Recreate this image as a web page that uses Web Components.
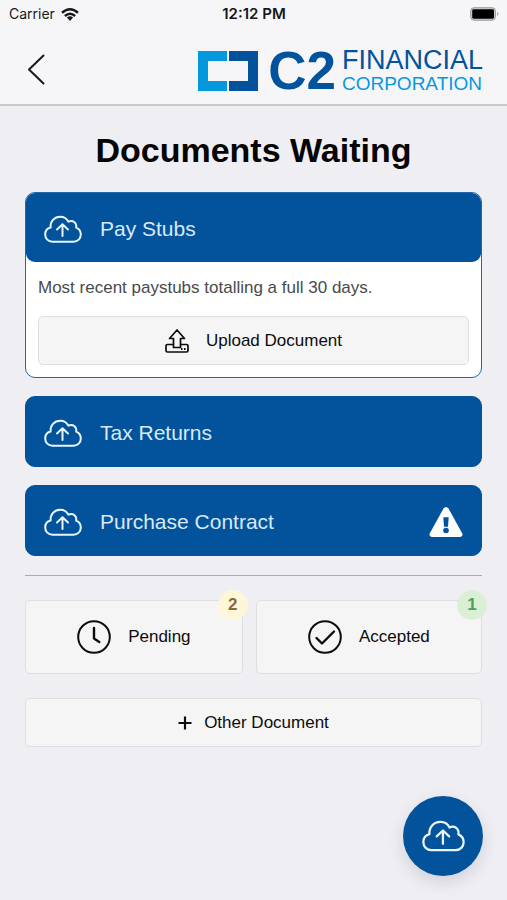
<!DOCTYPE html>
<html lang="en">
<head>
<meta charset="utf-8">
<meta name="viewport" content="width=device-width, initial-scale=1">
<title>Documents Waiting</title>
<style>
  :root { --blue: #02539c; --sky: #0698dc; --page: #efeef3; }
  body { margin: 0; background: var(--page); color: #0c0c0d; font: 17px/24px "Liberation Sans", Arial, sans-serif; }
</style>
</head>
<body>
<documents-screen></documents-screen>

<script>
const define = (name, html, setup) => {
  const template = document.createElement('template');
  template.innerHTML = html;
  customElements.define(name, class extends HTMLElement {
    constructor() {
      super();
      this.attachShadow({ mode: 'open' }).append(template.content.cloneNode(true));
    }
    connectedCallback() { if (setup) setup(this, this.shadowRoot); }
  });
};

const icons = {
  cloud: ['0 0 38 28', '<g fill="none" stroke="currentColor" stroke-width="2" stroke-linecap="round" stroke-linejoin="round"><path d="M8.500 26.700C4.200 26.700 1.200 23.500 1.200 19.600C1.200 16 3.300 13.300 6.600 12.500C6 6.500 10.300 1.700 16.300 1.700C20 1.700 22.800 3.500 24.300 6.700C28.700 4.400 33 7.700 32.200 12.700C35 13.900 36.800 16.500 36.800 19.600C36.800 23.500 33.800 26.700 29.500 26.700Z"/><path d="M18.500 21V10M13 14.500L18.500 9.300L24 14.500"/></g>'],
  upload: ['0 0 24 24', '<g fill="none" stroke="currentColor" stroke-width="1.700" stroke-linejoin="round"><path d="M8.500 15.500H2.500Q1 15.500 1 17V21.500Q1 23 2.500 23H21.500Q23 23 23 21.500V17Q23 15.500 21.500 15.500H15.500"/><path d="M8.500 18.500V9.500H4.500L12 1L19.500 9.500H15.500V18.500Z"/></g><path d="M16 19h1.500v2H16zM19 19h1.500v2H19z" fill="currentColor"/>'],
  clock: ['0 0 34 34', '<g fill="none" stroke="currentColor" stroke-width="2" stroke-linecap="round" stroke-linejoin="round"><circle cx="17" cy="17" r="15.800"/><path stroke-width="2.400" d="M17 8V18.500L22.300 22"/></g>'],
  check: ['0 0 34 34', '<g fill="none" stroke="currentColor" stroke-width="2" stroke-linecap="round" stroke-linejoin="round"><circle cx="17" cy="17" r="15.800"/><path stroke-width="2.400" d="M8.500 18L14 23.500L26 11.500"/></g>'],
  plus: ['0 0 14 14', '<path d="M7 .5V13.500M.5 7H13.500" stroke="currentColor" stroke-width="2.200"/>'],
  warning: ['0 0 34 30', '<path fill="currentColor" d="M14.500 1.600Q17-1.400 19.500 1.600L33.300 26.500Q34.300 29.600 31 30H3Q-.3 29.600.7 26.500Z"/><path fill="#02539c" d="M14.300 10.300H19.700L19 19.800H15Z"/><circle cx="17" cy="23.500" r="2.800" fill="#02539c"/>'],
  back: ['0 0 18 31', '<path d="M16.500 1.500L2 15.500L16.500 29.500" fill="none" stroke="currentColor" stroke-width="2" stroke-linecap="round" stroke-linejoin="round"/>'],
  wifi: ['0 0 18 13', '<g fill="none" stroke="currentColor" stroke-width="2.500"><path d="M1 4.800Q9-2.300 17 4.800M3.900 8Q9 3.500 14.100 8"/></g><path d="M5.900 9.600Q9 7 12.100 9.600L9 13Z" fill="currentColor"/>'],
  battery: ['0 0 30 15', '<rect x=".7" y=".7" width="25.600" height="13" rx="3.500" fill="#ccc" stroke="#999" stroke-width="1"/><rect x="2.300" y="2.300" width="22.500" height="9.800" rx="1.500"/><path d="M28 5Q31 7.200 28 9.400Z" fill="#aaa"/>'],
  brackets: ['0 0 60 40', '<path d="M0 0H29V10H10V30H29V40H0Z" fill="#0698dc"/><path d="M31 0H60V40H31V30H50V10H31Z" fill="#02539c"/>']
};

define('app-icon', `
  <style>
    :host { display: block; flex: none; width: 24px; }
    svg { display: block; width: 100%; height: auto; overflow: visible; }
  </style>`, (host, root) => {
  const icon = icons[host.getAttribute('name')];
  if (!icon || root.querySelector('svg')) return;
  root.innerHTML += `<svg viewBox="${icon[0]}" aria-hidden="true">${icon[1]}</svg>`;
});

define('status-bar', `
  <style>
    :host { display: grid; grid-template-columns: 1fr auto 1fr; align-items: center; height: 28px; padding: 0 8px 0 9px; font: 14px/20px Inter, sans-serif; color: #18181a; }
    .network { display: flex; align-items: center; gap: 6px; }
    time { font-size: 15px; font-weight: 600; }
    .wifi { width: 18px; }
    .battery { width: 29px; justify-self: end; color: #000; }
  </style>
  <div class="network"><span>Carrier</span><app-icon class="wifi" name="wifi"></app-icon></div>
  <time>12:12 PM</time>
  <app-icon class="battery" name="battery"></app-icon>`);

define('brand-logo', `
  <style>
    :host { display: flex; align-items: center; color: var(--blue); }
    app-icon { width: 60px; }
    .initials { margin: 0 6px 0 10px; font-size: 53px; line-height: 44px; font-weight: 700; }
    .name { display: grid; }
    .top { font-size: 27px; line-height: 26px; }
    .bottom { font-size: 19px; line-height: 22px; color: var(--sky); }
  </style>
  <app-icon name="brackets"></app-icon>
  <span class="initials">C2</span>
  <span class="name"><span class="top">FINANCIAL</span><span class="bottom">CORPORATION</span></span>`);

define('app-header', `
  <style>
    :host { display: block; background: #f6f6f9; border-bottom: 2px solid #c9c9cc; }
    .bar { display: flex; align-items: center; justify-content: space-between; height: 76px; box-sizing: border-box; padding: 6px 24px 0 19px; }
    button { display: block; padding: 4px 8px; border: 0; background: none; color: #18181a; }
    app-icon { width: 18px; }
    brand-logo { margin-top: 4px; }
  </style>
  <status-bar></status-bar>
  <div class="bar">
    <button type="button" aria-label="Back"><app-icon name="back"></app-icon></button>
    <brand-logo></brand-logo>
  </div>`);

define('document-card', `
  <style>
    :host { display: block; border: 1px solid #2068a9; border-radius: 10px; background: #fff; }
    :host(:not([open])) { border-color: var(--blue); background: var(--blue); }
    .head { display: flex; align-items: center; gap: 18px; width: 100%; height: 69px; padding: 2px 18px 0; border: 0; border-radius: 9px; background: var(--blue); color: #d9e9f7; font: inherit; font-size: 21px; text-align: left; }
    .cloud { width: 38px; color: #e8f5ff; }
    .title { flex: 1; }
    .alert { width: 34px; color: #fff; }
    .body { padding: 14px 12px 12px; }
    .body[hidden], .alert[hidden] { display: none; }
  </style>
  <button class="head" type="button" aria-controls="body">
    <app-icon class="cloud" name="cloud"></app-icon>
    <span class="title"><slot name="title"></slot></span>
    <app-icon class="alert" name="warning" hidden></app-icon>
  </button>
  <div class="body" id="body"><slot></slot></div>`, (host, root) => {
  const open = host.hasAttribute('open');
  root.querySelector('.head').setAttribute('aria-expanded', open);
  root.querySelector('.body').hidden = !open;
  root.querySelector('.alert').hidden = !host.hasAttribute('alert');
});

define('action-button', `
  <style>
    :host { display: block; position: relative; --icon: 24px; --gap: 17px; --height: 49px; }
    button { display: flex; align-items: center; justify-content: center; gap: var(--gap); width: 100%; height: var(--height); padding: 0 16px; border: 1px solid #dfdfe2; border-radius: 5px; background: #f5f5f6; color: #0c0c0d; font: inherit; }
    app-icon { width: var(--icon); }
  </style>
  <button type="button"><span><slot></slot></span></button>
  <slot name="badge"></slot>`, (host, root) => {
  if (root.querySelector('app-icon')) return;
  const icon = document.createElement('app-icon');
  icon.setAttribute('name', host.getAttribute('icon'));
  root.querySelector('button').prepend(icon);
});

define('count-badge', `
  <style>
    :host { position: absolute; top: -10px; right: -5px; display: grid; place-items: center; width: 30px; height: 30px; border-radius: 50%; background: #fdf6d8; color: #8a6a3c; font-weight: 700; }
    :host([tone="success"]) { background: #d9f0d5; color: #4e9e5c; }
  </style>
  <slot></slot>`);

define('upload-fab', `
  <style>
    :host { position: fixed; right: 24px; bottom: 24px; }
    button { display: grid; place-items: center; width: 80px; height: 80px; padding: 0; border: 0; border-radius: 50%; background: var(--blue); color: #e8f5ff; box-shadow: 0 6px 16px rgba(60, 60, 80, .16); }
    app-icon { width: 43px; }
  </style>
  <button type="button" aria-label="Upload document"><app-icon name="cloud"></app-icon></button>`);

define('documents-screen', `
  <style>
    :host { display: block; }
    main { padding: 24px 25px; }
    h1 { margin: 0 0 22px; font-size: 34px; line-height: 40px; text-align: center; color: #050505; }
    .cards { display: grid; gap: 18px; }
    p { margin: 0 0 16px; line-height: 24px; color: #4a4a4c; }
    hr { margin: 19px 0 24px; border: 0; border-top: 1px solid #a3afb5; }
    .states { display: flex; gap: 13px; margin-bottom: 24px; }
    .states action-button { flex: 1 1 auto; --icon: 34px; --height: 74px; }
    .other { --icon: 14px; --gap: 12px; }
  </style>
  <app-header></app-header>
  <main>
    <h1>Documents Waiting</h1>
    <div class="cards">
      <document-card open>
        <span slot="title">Pay Stubs</span>
        <p>Most recent paystubs totalling a full 30 days.</p>
        <action-button icon="upload">Upload Document</action-button>
      </document-card>
      <document-card><span slot="title">Tax Returns</span></document-card>
      <document-card alert><span slot="title">Purchase Contract</span></document-card>
    </div>
    <hr>
    <div class="states">
      <action-button icon="clock">Pending<count-badge slot="badge">2</count-badge></action-button>
      <action-button icon="check">Accepted<count-badge slot="badge" tone="success">1</count-badge></action-button>
    </div>
    <action-button class="other" icon="plus">Other Document</action-button>
  </main>
  <upload-fab></upload-fab>`);
</script>
</body>
</html>
